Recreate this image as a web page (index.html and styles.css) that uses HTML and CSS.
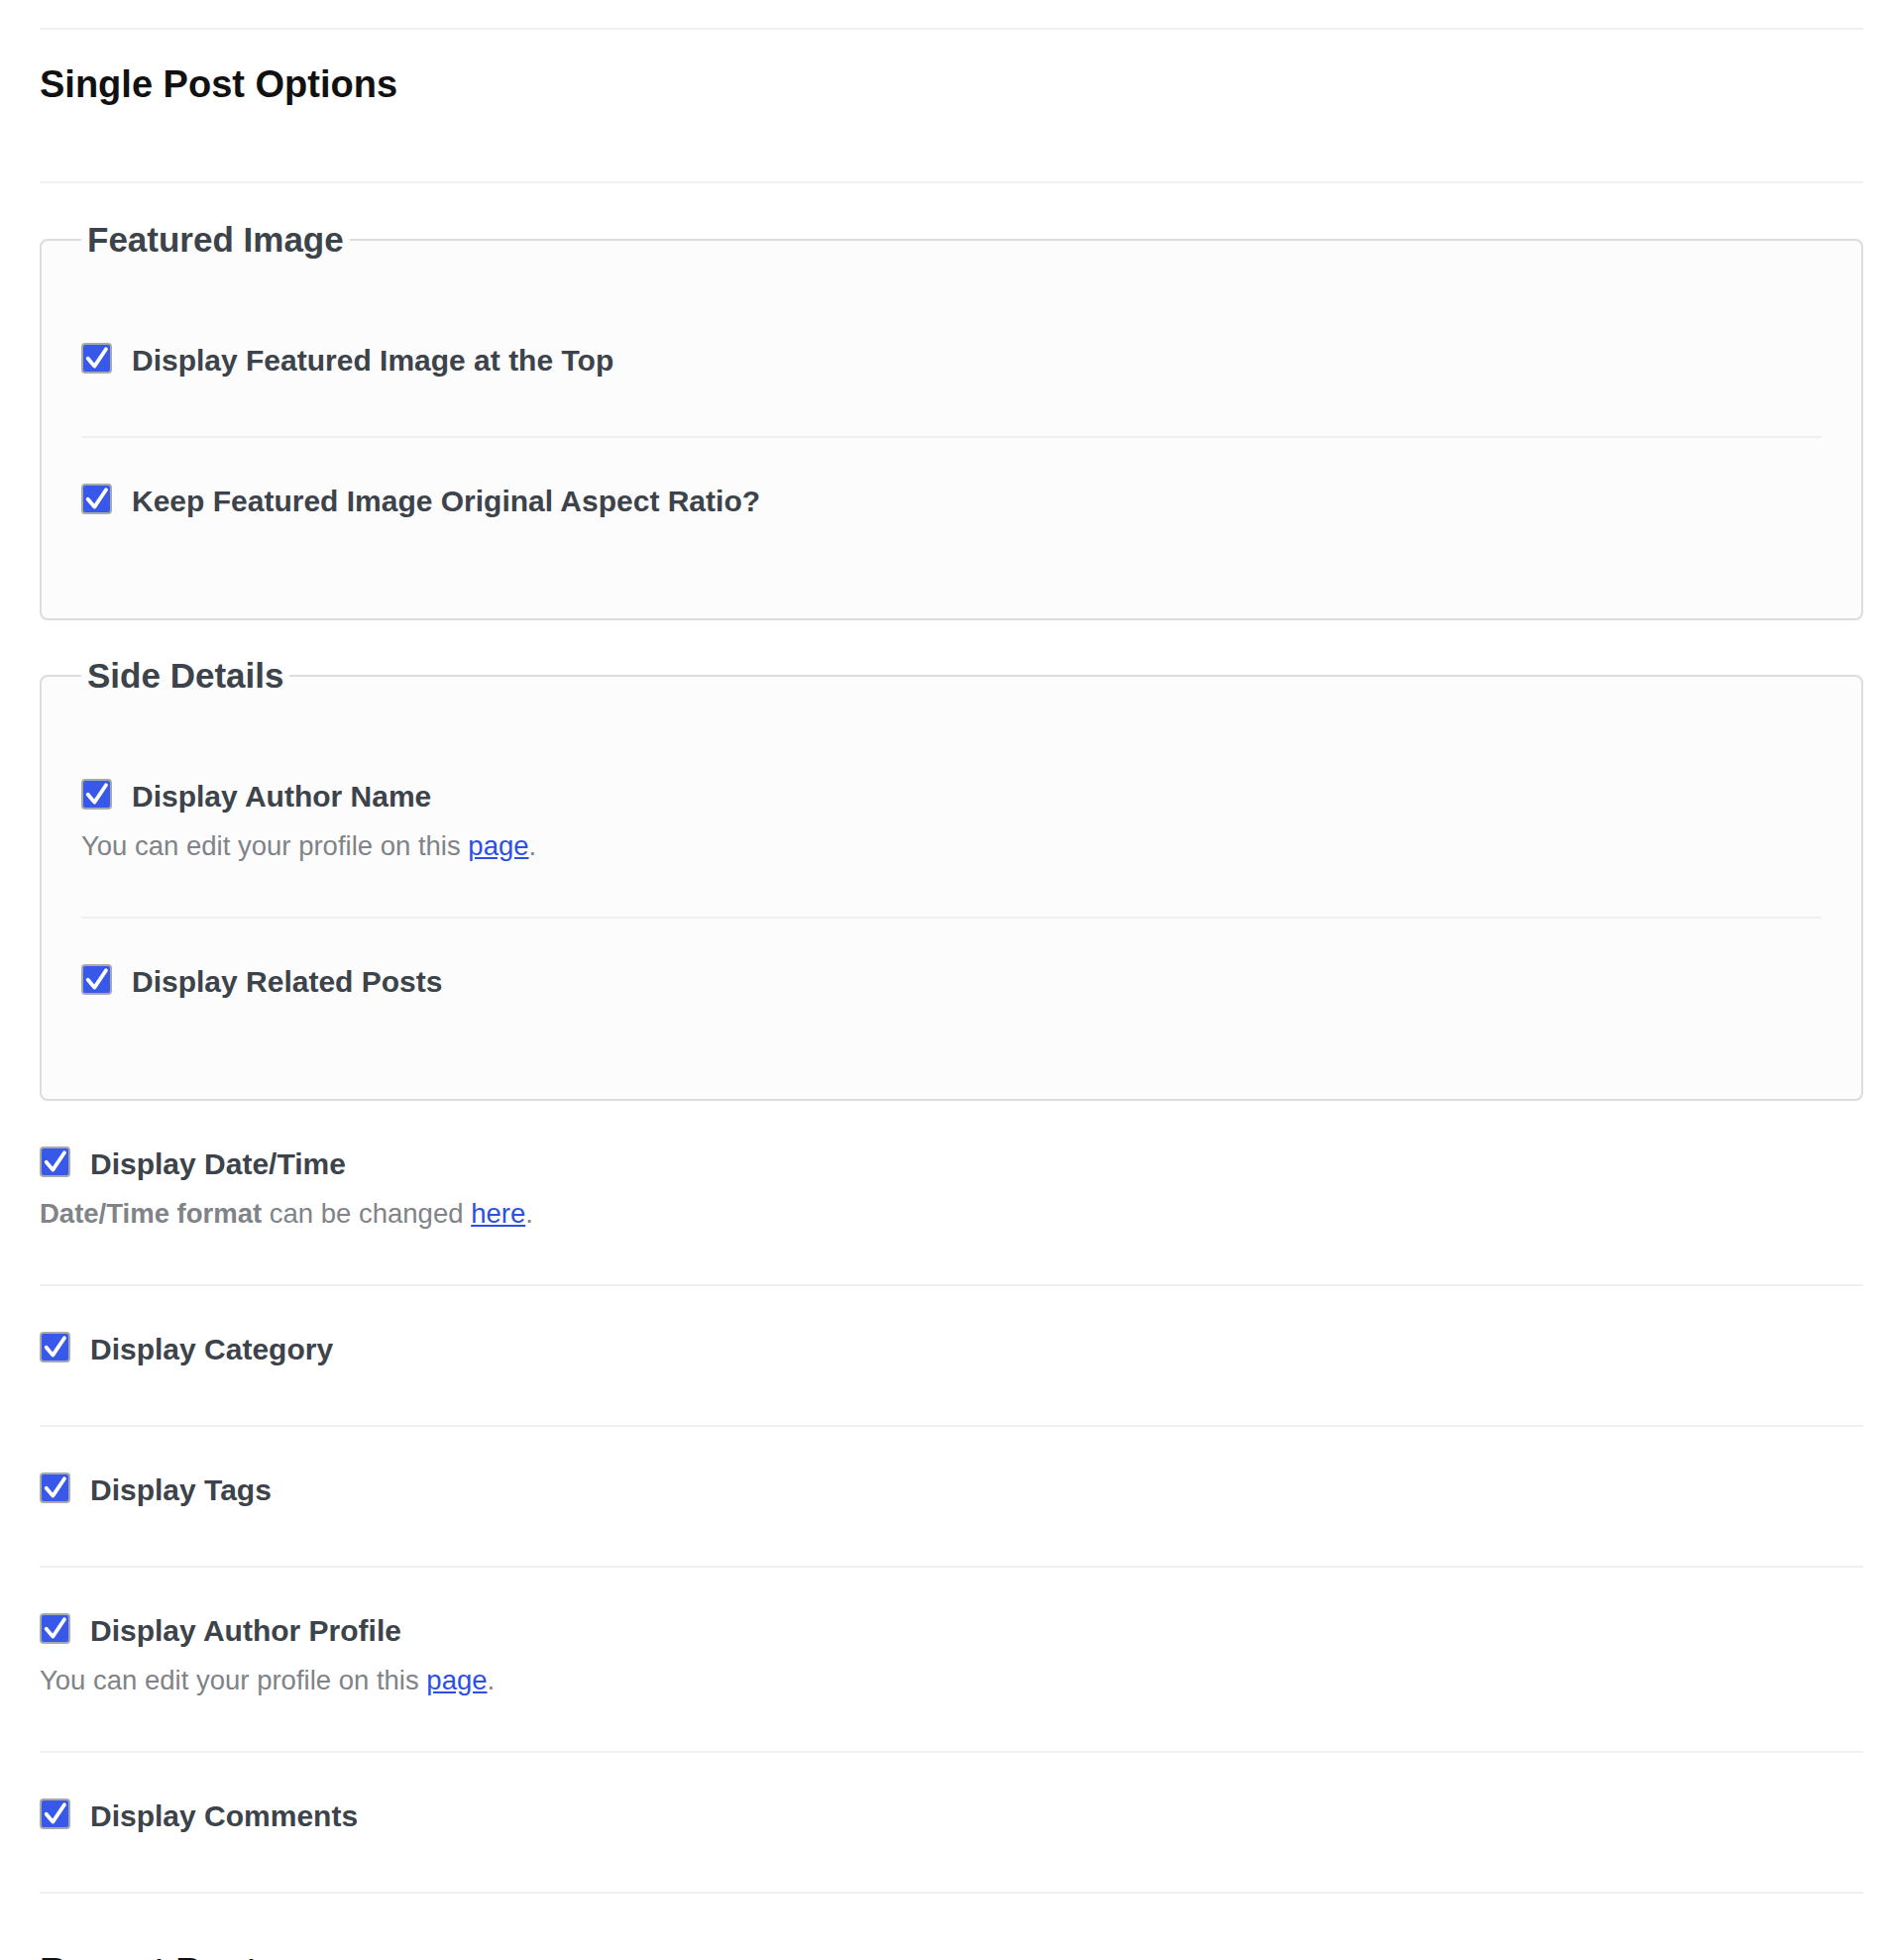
FILE: index.html
```html
<!DOCTYPE html>
<html lang="en">
<head>
<meta charset="utf-8">
<title>Single Post Options</title>
<link rel="stylesheet" href="styles.css">
</head>
<body>
<div class="page">
  <div class="rule-top"></div>
  <section class="settings">
    <h2 class="section-title">Single Post Options</h2>

    <fieldset class="group">
      <legend>Featured Image</legend>
      <div class="option">
        <label class="check"><span class="box"><svg viewBox="0 0 27 27"><path d="M4.7 13.7 L11.3 21.6 L23 4.3"/></svg></span><span>Display Featured Image at the Top</span></label>
      </div>
      <div class="option">
        <label class="check"><span class="box"><svg viewBox="0 0 27 27"><path d="M4.7 13.7 L11.3 21.6 L23 4.3"/></svg></span><span>Keep Featured Image Original Aspect Ratio?</span></label>
      </div>
    </fieldset>

    <fieldset class="group">
      <legend>Side Details</legend>
      <div class="option">
        <label class="check"><span class="box"><svg viewBox="0 0 27 27"><path d="M4.7 13.7 L11.3 21.6 L23 4.3"/></svg></span><span>Display Author Name</span></label>
        <p class="desc">You can edit your profile on this <a href="#">page</a>.</p>
      </div>
      <div class="option">
        <label class="check"><span class="box"><svg viewBox="0 0 27 27"><path d="M4.7 13.7 L11.3 21.6 L23 4.3"/></svg></span><span>Display Related Posts</span></label>
      </div>
    </fieldset>

    <div class="option">
      <label class="check"><span class="box"><svg viewBox="0 0 27 27"><path d="M4.7 13.7 L11.3 21.6 L23 4.3"/></svg></span><span>Display Date/Time</span></label>
      <p class="desc"><strong>Date/Time format</strong> can be changed <a href="#">here</a>.</p>
    </div>
    <div class="option">
      <label class="check"><span class="box"><svg viewBox="0 0 27 27"><path d="M4.7 13.7 L11.3 21.6 L23 4.3"/></svg></span><span>Display Category</span></label>
    </div>
    <div class="option">
      <label class="check"><span class="box"><svg viewBox="0 0 27 27"><path d="M4.7 13.7 L11.3 21.6 L23 4.3"/></svg></span><span>Display Tags</span></label>
    </div>
    <div class="option">
      <label class="check"><span class="box"><svg viewBox="0 0 27 27"><path d="M4.7 13.7 L11.3 21.6 L23 4.3"/></svg></span><span>Display Author Profile</span></label>
      <p class="desc">You can edit your profile on this <a href="#">page</a>.</p>
    </div>
    <div class="option">
      <label class="check"><span class="box"><svg viewBox="0 0 27 27"><path d="M4.7 13.7 L11.3 21.6 L23 4.3"/></svg></span><span>Display Comments</span></label>
    </div>
  </section>

  <section class="settings next">
    <h2 class="section-title">Recent Posts</h2>
  </section>
</div>
</body>
</html>
```
FILE: styles.css
```css
* {
  box-sizing: border-box;
}

body {
  margin: 0;
  background: #ffffff;
  font-family: "Liberation Sans", Arial, sans-serif;
  color: #3c434a;
}

.page {
  padding: 28px 24px 0 40px;
}

.rule-top {
  border-top: 2px solid #f0f0f1;
}

.section-title {
  margin: 32px 0 0;
  padding-bottom: 75px;
  border-bottom: 2px solid #f0f0f1;
  font-size: 38px;
  line-height: 46px;
  font-weight: 700;
  color: #111111;
}

.next .section-title {
  margin-top: 56px;
}

.group {
  margin: 37px 0 0;
  padding: 38px 40px 42px;
  border: 2px solid #dcdcde;
  border-radius: 8px;
  background: #fcfcfc;
  min-inline-size: 0;
}

.group + .group {
  margin-top: 36px;
}

.group legend {
  padding: 0 6px;
  font-size: 35px;
  line-height: 40px;
  font-weight: 700;
  color: #3c434a;
}

.option {
  padding: 46px 0 48px;
  border-bottom: 2px solid #f0f0f1;
}

.group .option:last-child {
  border-bottom: 0;
}

.check {
  display: flex;
  align-items: flex-start;
  margin-bottom: 10px;
  font-size: 30px;
  line-height: 36px;
  font-weight: 700;
  color: #3c434a;
}

.box {
  flex: none;
  display: flex;
  width: 31px;
  height: 31px;
  margin-right: 20px;
  border: 2px solid #a7aaad;
  border-radius: 4px;
  background: #3858e9;
}

.box svg {
  width: 27px;
  height: 27px;
}

.box path {
  fill: none;
  stroke: #ffffff;
  stroke-width: 3.8;
  stroke-linecap: round;
  stroke-linejoin: round;
}

.desc {
  margin: 12px 0 3px;
  font-size: 27.5px;
  line-height: 40px;
  color: #808387;
}

.desc strong {
  font-weight: 700;
}

.desc a {
  color: #2c4fe4;
  text-decoration: underline;
}
```
